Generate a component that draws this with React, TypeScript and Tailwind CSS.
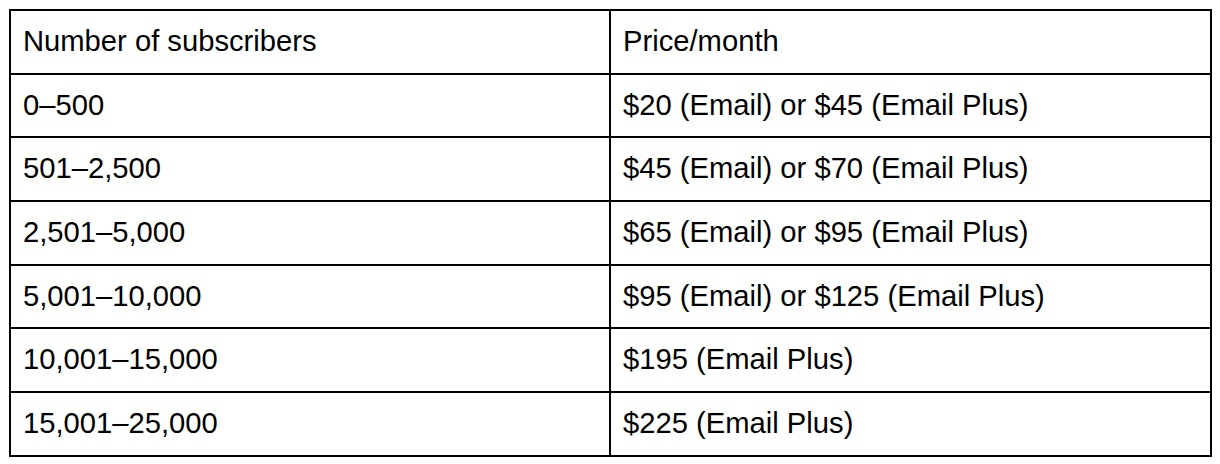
import React from "react";

const rows: [string, string][] = [
  ["0–500", "$20 (Email) or $45 (Email Plus)"],
  ["501–2,500", "$45 (Email) or $70 (Email Plus)"],
  ["2,501–5,000", "$65 (Email) or $95 (Email Plus)"],
  ["5,001–10,000", "$95 (Email) or $125 (Email Plus)"],
  ["10,001–15,000", "$195 (Email Plus)"],
  ["15,001–25,000", "$225 (Email Plus)"],
];

const Row: React.FC<{ left: string; right: string; first?: boolean }> = ({
  left,
  right,
  first,
}) => (
  <div
    className={`flex ${first ? "h-[61.7px]" : "h-[63.7px] border-t-2 border-black"}`}
  >
    <div className="flex w-[598px] items-center px-3">{left}</div>
    <div className="flex flex-1 items-center border-l-2 border-black px-3">
      {right}
    </div>
  </div>
);

const App: React.FC = () => {
  return (
    <div
      className="min-h-screen bg-white pl-[9px] pt-[9px] text-[29.2px] text-black"
      style={{ fontFamily: '"Liberation Sans", Arial, Helvetica, sans-serif' }}
    >
      <div className="w-[1203px] border-2 border-black">
        <Row left="Number of subscribers" right="Price/month" first />
        {rows.map(([l, r]) => (
          <Row key={l} left={l} right={r} />
        ))}
      </div>
    </div>
  );
};

export default App;
